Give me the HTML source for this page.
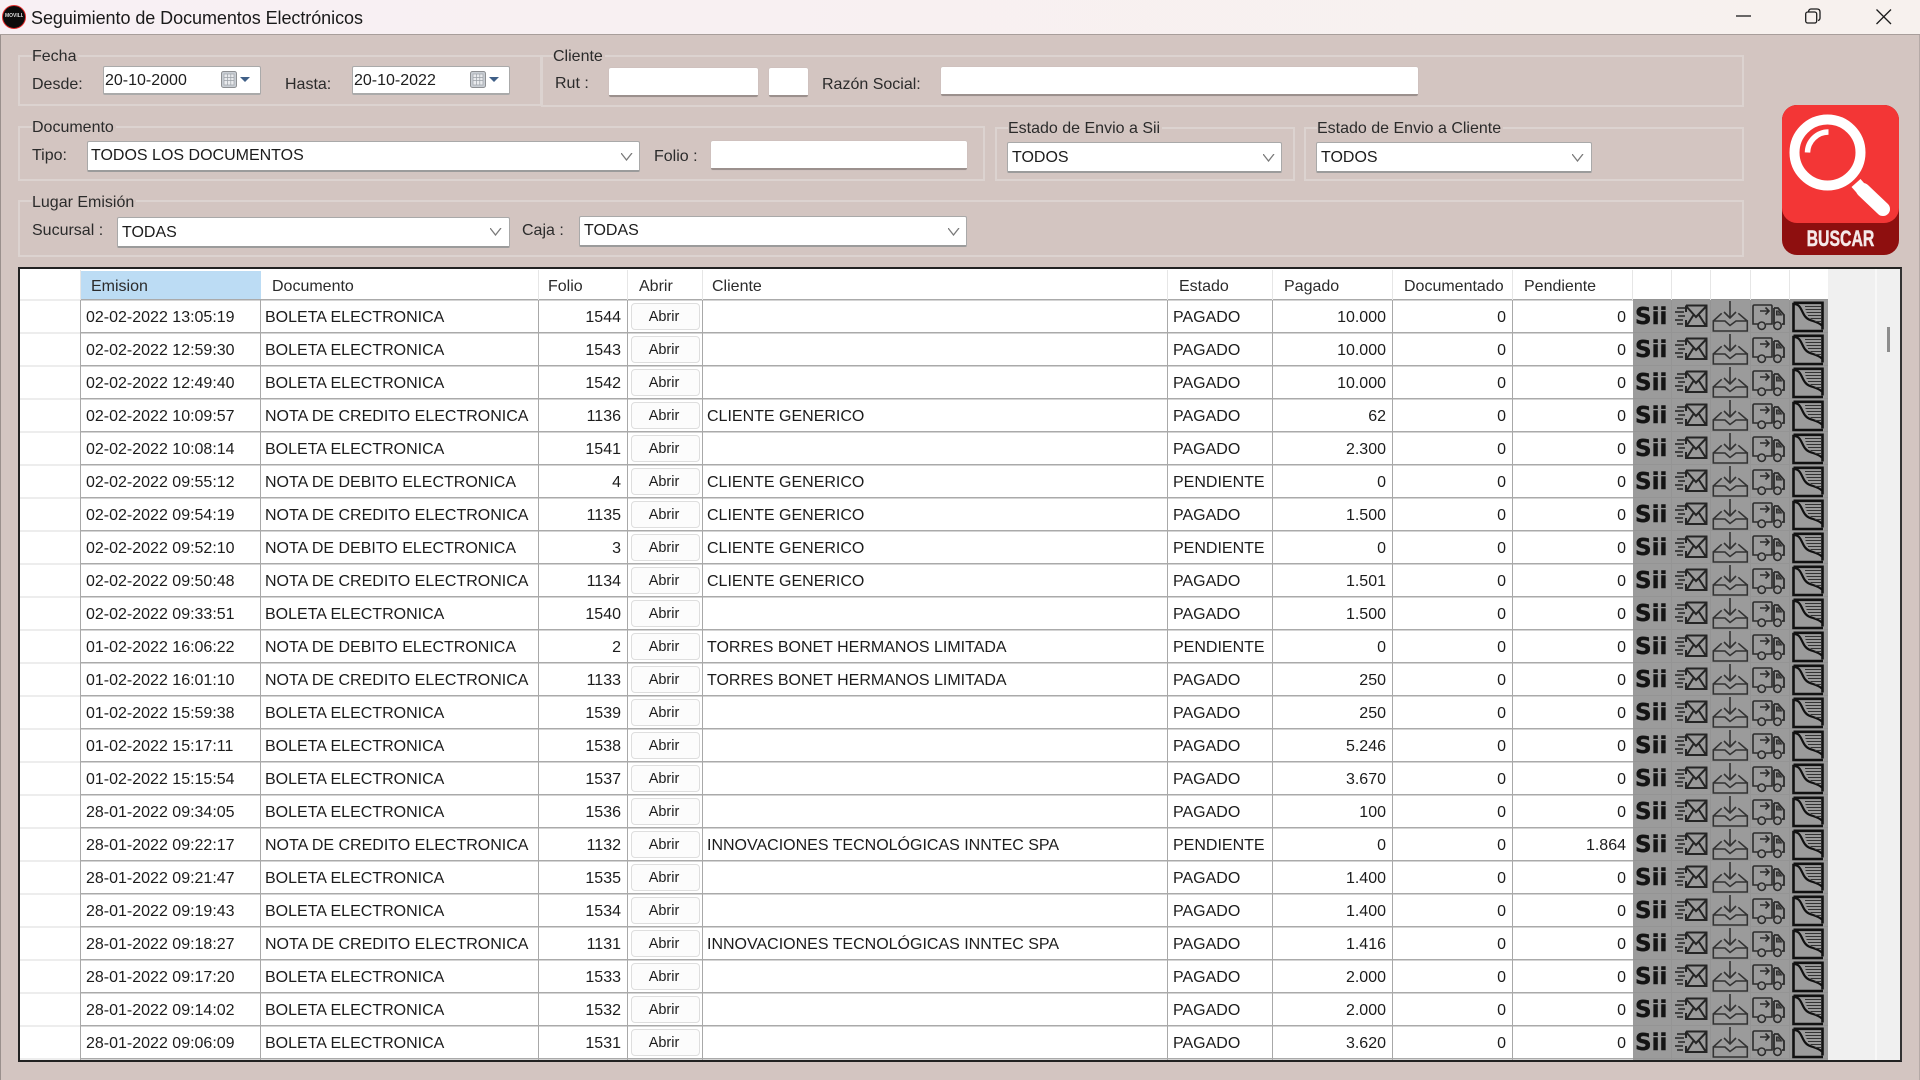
<!DOCTYPE html>
<html><head><meta charset="utf-8"><title>Seguimiento de Documentos Electrónicos</title>
<style>
html,body{margin:0;padding:0}
body{width:1920px;height:1080px;position:relative;overflow:hidden;background:#d3c5c1;font-family:"Liberation Sans",sans-serif;font-size:16px;color:#1c1c1c;filter:blur(.35px)}
div,span,svg{position:absolute;box-sizing:border-box}
.l{white-space:nowrap;line-height:20px;height:20px;color:#2b2b2b}
.g{border:2px solid #dcd3d0}
.lb{background:#d3c5c1;padding:0 2px 0 0}
.inp{background:#fff;border-bottom:2px solid #9b908d;border-radius:2px;box-shadow:0 0 1px #b9aeab}
.cb{background:#fff;border:1px solid #a9a9a9;border-bottom:2px solid #9b9b9b;border-radius:2px;line-height:28px;padding-left:3px;white-space:nowrap;color:#1c1c1c}
#tb{left:0;top:0;width:1920px;height:35px;background:linear-gradient(90deg,#f8f0f4,#f7f1ee);border-bottom:1px solid #a89e9b}
#tbl{left:18px;top:267px;width:1884px;height:795px;border:2px solid #222;border-right:2px solid #333;background:#fff;overflow:hidden}
#in{left:-20px;top:-269px;width:1920px;height:1080px}
.h{top:277px;line-height:20px;white-space:nowrap;color:#2b2b2b}
.r{left:0;width:1920px;height:33px;white-space:nowrap}
.r span{top:7px;line-height:21px}
.d{left:86px}.t{left:265px}.c{left:707px}.e{left:1173px}
.f{right:1299px}.p{right:534px}.o{right:414px}.n{right:294px}
.r .b{left:631px;top:3px;width:69px;height:27px;background:#fcfcfc;border:1px solid #dedede;border-radius:4px;text-align:center;line-height:26px;font-size:14.5px;padding-right:3px}
.r .s{left:1635px;top:3px;font:bold 23px/29px "DejaVu Sans",sans-serif;color:#141414;-webkit-text-stroke:.4px #141414}
.r svg{left:1633px;top:0}
.v{width:1px;top:300px;height:762px;background:#a8a8a8}
.vh{width:1px;top:270px;height:30px;background:#e6e6e6}
</style></head><body>
<svg width="0" height="0" style="left:0;top:0"><defs>
<g id="ic" fill="none" stroke="#252525" stroke-width="1.7">
 <!-- mail -->
 <g transform="translate(39,0)">
  <path d="M14 5.5H34.5V26H14V20M14 12V5.5M14 6l10 11L34.5 6M14.5 26l7-11M34 26l-7-11" stroke-width="2"/>
  <path d="M5 8h8M3 12h9M6 16h7M3 20h8M5 24h6" stroke-width="1.5"/>
 </g>
 <!-- inbox -->
 <g transform="translate(78,0)" stroke="#333" stroke-width="1.6">
  <path d="M2.300 21L10.700 13.300M36.300 21L27.300 13.300M2.300 21V31H36.300V21H25L19 25.500L14 21Z"/>
  <path d="M19 1V18M13 12l6 6 6-6"/>
 </g>
 <!-- truck -->
 <g transform="translate(117,0)" stroke="#2c2c2c" stroke-width="1.600">
  <path d="M8 24H3V6.500Q3 5 4.500 5H21Q22 5 22 6.500V24H16"/>
  <path d="M10 11H19M15.500 7.500L19 11L15.500 14.500"/>
  <path d="M24 8H28L34 15V24H32M24 8V24" stroke-width="1.800"/>
  <path d="M26.500 11H28.500L31.500 15H26.500Z" fill="#555" stroke-width="1"/>
  <circle cx="11.700" cy="25.700" r="3.700"/><circle cx="27.500" cy="25.700" r="3.700"/>
 </g>
 <!-- doc -->
 <g transform="translate(156,0)" stroke="#111">
  <path d="M4.500 2.800H33.500V29.500M4.500 2.800V31H34" stroke-width="2.600"/>
  <path d="M5 4C14 4 12 17 21 20C25 21.500 29 22 33 25.500" stroke-width="2.200"/>
  <path d="M16 6.500H32M16.500 9.500H32M17.500 12.500H32M19 15.500H32M21.500 18.500H32M26 21.500H32" stroke-width="1.100" stroke="#333"/>
 </g>
</g>
<g id="cal"><rect x=".5" y=".5" width="15" height="16" rx="2" fill="#c9ced4" stroke="#8d8f92"/><rect x="3" y="3" width="10" height="11" fill="#e9ebee" stroke="#a5a9ae" stroke-width=".8"/><path d="M3 6.500h10M3 9.500h10M6.500 3v11M9.800 3v11" stroke="#9aa0a6" stroke-width=".7"/></g>
<path id="chev" d="M0 0l5.500 7L11 0" fill="none" stroke="#7a7a7a" stroke-width="1.300"/>
</defs></svg>

<div id="tb"></div>
<div style="left:0;top:35px;width:1px;height:1045px;background:#9a908d"></div>
<div style="left:1919px;top:35px;width:1px;height:1045px;background:#b5aaa7"></div>
<div style="left:2px;top:5px;width:24px;height:24px;border-radius:50%;background:#0c0c0c;border:1px solid #e02a2a"></div>
<div style="left:5px;top:12px;width:18px;height:8px;font:bold 5px/8px 'Liberation Sans',sans-serif;color:#ddd;text-align:center;white-space:nowrap;overflow:hidden">MOVILLY</div>
<div style="left:31px;top:7px;font-size:18px;line-height:22px;color:#1a1a1a;white-space:nowrap;letter-spacing:-.06px">Seguimiento de Documentos Electrónicos</div>
<svg style="left:1730px;top:5px" width="190" height="24" fill="none" stroke="#1c1c1c" stroke-width="1.300">
 <path d="M6 11H21"/>
 <rect x="75.700" y="7" width="11" height="11" rx="2"/><path d="M78.500 6.500Q79 4 81 4H87Q90 4 90 7V13Q90 15 88 15.500"/>
 <path d="M146.500 4.500L161 19M161 4.500L146.500 19"/>
</svg>

<!-- group boxes -->
<div class="g" style="left:18px;top:55px;width:524px;height:51px"></div>
<div class="g" style="left:541px;top:55px;width:1203px;height:52px"></div>
<div class="g" style="left:18px;top:126px;width:967px;height:55px"></div>
<div class="g" style="left:995px;top:127px;width:300px;height:54px"></div>
<div class="g" style="left:1304px;top:127px;width:440px;height:54px"></div>
<div class="g" style="left:18px;top:200px;width:1726px;height:57px"></div>

<div class="l lb" style="left:32px;top:47px">Fecha</div>
<div class="l" style="left:32px;top:75px">Desde:</div>
<div class="l" style="left:285px;top:75px">Hasta:</div>
<div class="cb" style="left:103px;top:66px;width:158px;height:29px;padding-left:1px;line-height:27px;border-color:#aaa">20-10-2000</div>
<svg style="left:221px;top:71px" width="32" height="18"><use href="#cal"/><path d="M19 6h10l-5 5z" fill="#3f5f87"/></svg>
<div class="cb" style="left:352px;top:66px;width:158px;height:29px;padding-left:1px;line-height:27px;border-color:#aaa">20-10-2022</div>
<svg style="left:470px;top:71px" width="32" height="18"><use href="#cal"/><path d="M19 6h10l-5 5z" fill="#3f5f87"/></svg>

<div class="l lb" style="left:553px;top:47px">Cliente</div>
<div class="l" style="left:555px;top:74px">Rut :</div>
<div class="inp" style="left:609px;top:68px;width:149px;height:29px"></div>
<div class="inp" style="left:769px;top:68px;width:39px;height:29px"></div>
<div class="l" style="left:822px;top:75px">Razón Social:</div>
<div class="inp" style="left:941px;top:67px;width:477px;height:29px"></div>

<div class="l lb" style="left:32px;top:118px">Documento</div>
<div class="l" style="left:32px;top:146px">Tipo:</div>
<div class="cb" style="left:87px;top:141px;width:553px;height:31px">TODOS LOS DOCUMENTOS</div>
<svg style="left:621px;top:153px" width="12" height="8"><use href="#chev"/></svg>
<div class="l" style="left:654px;top:147px">Folio :</div>
<div class="inp" style="left:711px;top:141px;width:256px;height:29px"></div>

<div class="l lb" style="left:1008px;top:119px">Estado de Envio a Sii</div>
<div class="cb" style="left:1007px;top:142px;width:275px;height:31px;padding-left:4px;line-height:29px">TODOS</div>
<svg style="left:1263px;top:154px" width="12" height="8"><use href="#chev"/></svg>
<div class="l lb" style="left:1317px;top:119px">Estado de Envio a Cliente</div>
<div class="cb" style="left:1316px;top:142px;width:276px;height:31px;padding-left:4px;line-height:29px">TODOS</div>
<svg style="left:1572px;top:154px" width="12" height="8"><use href="#chev"/></svg>

<div class="l lb" style="left:32px;top:193px">Lugar Emisión</div>
<div class="l" style="left:32px;top:221px">Sucursal :</div>
<div class="cb" style="left:117px;top:217px;width:393px;height:31px;padding-left:4px;line-height:29px">TODAS</div>
<svg style="left:490px;top:228px" width="12" height="8"><use href="#chev"/></svg>
<div class="l" style="left:522px;top:221px">Caja :</div>
<div class="cb" style="left:579px;top:216px;width:388px;height:31px;padding-left:4px;line-height:28px">TODAS</div>
<svg style="left:948px;top:228px" width="12" height="8"><use href="#chev"/></svg>

<!-- buscar -->
<svg style="left:1782px;top:105px" width="117" height="150" viewBox="0 0 117 150">
 <rect width="117" height="150" rx="15" fill="#8e0f0f"/>
 <path d="M0 15A15 15 0 0 1 15 0H102A15 15 0 0 1 117 15V103A15 15 0 0 1 102 118H15A15 15 0 0 1 0 103Z" fill="#f33636"/>
 <circle cx="45.500" cy="47.500" r="33" fill="none" stroke="#fff" stroke-width="10"/>
 <path d="M25.500 47.500A21 21 0 0 1 46.500 27" fill="none" stroke="#fff" stroke-width="5.500"/>
 <path d="M81 85L101 104" stroke="#fff" stroke-width="14" stroke-linecap="round"/>
 <path d="M74 78L82 87" stroke="#fff" stroke-width="12"/>
</svg>
<div style="left:1781px;top:227px;width:119px;text-align:center;font:bold 22px/24px 'Liberation Sans',sans-serif;color:#f5e8e8;transform:scaleX(.72);white-space:nowrap;-webkit-text-stroke:.5px #f5e8e8">BUSCAR</div>

<!-- table -->
<div id="tbl"><div id="in">
 <div style="left:1828px;top:269px;width:47px;height:800px;background:#f0f0f0"></div>
 <div style="left:1875px;top:269px;width:2px;height:800px;background:#f8f8f8"></div>
 <div style="left:1877px;top:269px;width:24px;height:800px;background:#f0f0f0"></div>
 <div style="left:1887px;top:327px;width:3px;height:25px;background:#8d8d8d"></div>
 <div style="left:81px;top:271px;width:180px;height:28px;background:#bcdcf4"></div>
 <div style="left:20px;top:299px;width:61px;height:763px;background:repeating-linear-gradient(#ededed 0 2px,#fff 2px 33px)"></div>
 <div style="left:81px;top:299px;width:1552px;height:763px;background:repeating-linear-gradient(#aaaaaa 0 1.500px,#fff 1.500px 33px)"></div>
 <div style="left:1633px;top:299px;width:195px;height:763px;background:repeating-linear-gradient(#949494 0 1px,#9b9b9b 1px 33px)"></div>
 <div class="vh" style="left:80px"></div><div class="vh" style="left:538px"></div><div class="vh" style="left:627px"></div><div class="vh" style="left:702px"></div><div class="vh" style="left:1167px"></div><div class="vh" style="left:1272px"></div><div class="vh" style="left:1392px"></div><div class="vh" style="left:1512px"></div><div class="vh" style="left:1632px"></div><div class="vh" style="left:1671px"></div><div class="vh" style="left:1710px"></div><div class="vh" style="left:1750px"></div><div class="vh" style="left:1789px"></div>
 <div class="v" style="left:80px"></div><div class="v" style="left:260px"></div><div class="v" style="left:538px"></div><div class="v" style="left:627px"></div><div class="v" style="left:702px"></div><div class="v" style="left:1167px"></div><div class="v" style="left:1272px"></div><div class="v" style="left:1392px"></div><div class="v" style="left:1512px"></div>
 <div class="v" style="left:1671px;background:#949494"></div><div class="v" style="left:1710px;background:#949494"></div><div class="v" style="left:1750px;background:#949494"></div><div class="v" style="left:1789px;background:#949494"></div>
 <div class="h" style="left:91px">Emision</div><div class="h" style="left:272px">Documento</div><div class="h" style="left:548px">Folio</div><div class="h" style="left:639px">Abrir</div><div class="h" style="left:712px">Cliente</div><div class="h" style="left:1179px">Estado</div><div class="h" style="left:1284px">Pagado</div><div class="h" style="left:1404px">Documentado</div><div class="h" style="left:1524px">Pendiente</div>

 <div class="r" style="top:300px"><span class="d">02-02-2022 13:05:19</span><span class="t">BOLETA ELECTRONICA</span><span class="f">1544</span><span class="b">Abrir</span><span class="e">PAGADO</span><span class="p">10.000</span><span class="o">0</span><span class="n">0</span><span class="s">Sii</span><svg width="195" height="33"><use href="#ic"/></svg></div>
 <div class="r" style="top:333px"><span class="d">02-02-2022 12:59:30</span><span class="t">BOLETA ELECTRONICA</span><span class="f">1543</span><span class="b">Abrir</span><span class="e">PAGADO</span><span class="p">10.000</span><span class="o">0</span><span class="n">0</span><span class="s">Sii</span><svg width="195" height="33"><use href="#ic"/></svg></div>
 <div class="r" style="top:366px"><span class="d">02-02-2022 12:49:40</span><span class="t">BOLETA ELECTRONICA</span><span class="f">1542</span><span class="b">Abrir</span><span class="e">PAGADO</span><span class="p">10.000</span><span class="o">0</span><span class="n">0</span><span class="s">Sii</span><svg width="195" height="33"><use href="#ic"/></svg></div>
 <div class="r" style="top:399px"><span class="d">02-02-2022 10:09:57</span><span class="t">NOTA DE CREDITO ELECTRONICA</span><span class="f">1136</span><span class="b">Abrir</span><span class="c">CLIENTE GENERICO</span><span class="e">PAGADO</span><span class="p">62</span><span class="o">0</span><span class="n">0</span><span class="s">Sii</span><svg width="195" height="33"><use href="#ic"/></svg></div>
 <div class="r" style="top:432px"><span class="d">02-02-2022 10:08:14</span><span class="t">BOLETA ELECTRONICA</span><span class="f">1541</span><span class="b">Abrir</span><span class="e">PAGADO</span><span class="p">2.300</span><span class="o">0</span><span class="n">0</span><span class="s">Sii</span><svg width="195" height="33"><use href="#ic"/></svg></div>
 <div class="r" style="top:465px"><span class="d">02-02-2022 09:55:12</span><span class="t">NOTA DE DEBITO ELECTRONICA</span><span class="f">4</span><span class="b">Abrir</span><span class="c">CLIENTE GENERICO</span><span class="e">PENDIENTE</span><span class="p">0</span><span class="o">0</span><span class="n">0</span><span class="s">Sii</span><svg width="195" height="33"><use href="#ic"/></svg></div>
 <div class="r" style="top:498px"><span class="d">02-02-2022 09:54:19</span><span class="t">NOTA DE CREDITO ELECTRONICA</span><span class="f">1135</span><span class="b">Abrir</span><span class="c">CLIENTE GENERICO</span><span class="e">PAGADO</span><span class="p">1.500</span><span class="o">0</span><span class="n">0</span><span class="s">Sii</span><svg width="195" height="33"><use href="#ic"/></svg></div>
 <div class="r" style="top:531px"><span class="d">02-02-2022 09:52:10</span><span class="t">NOTA DE DEBITO ELECTRONICA</span><span class="f">3</span><span class="b">Abrir</span><span class="c">CLIENTE GENERICO</span><span class="e">PENDIENTE</span><span class="p">0</span><span class="o">0</span><span class="n">0</span><span class="s">Sii</span><svg width="195" height="33"><use href="#ic"/></svg></div>
 <div class="r" style="top:564px"><span class="d">02-02-2022 09:50:48</span><span class="t">NOTA DE CREDITO ELECTRONICA</span><span class="f">1134</span><span class="b">Abrir</span><span class="c">CLIENTE GENERICO</span><span class="e">PAGADO</span><span class="p">1.501</span><span class="o">0</span><span class="n">0</span><span class="s">Sii</span><svg width="195" height="33"><use href="#ic"/></svg></div>
 <div class="r" style="top:597px"><span class="d">02-02-2022 09:33:51</span><span class="t">BOLETA ELECTRONICA</span><span class="f">1540</span><span class="b">Abrir</span><span class="e">PAGADO</span><span class="p">1.500</span><span class="o">0</span><span class="n">0</span><span class="s">Sii</span><svg width="195" height="33"><use href="#ic"/></svg></div>
 <div class="r" style="top:630px"><span class="d">01-02-2022 16:06:22</span><span class="t">NOTA DE DEBITO ELECTRONICA</span><span class="f">2</span><span class="b">Abrir</span><span class="c">TORRES BONET HERMANOS LIMITADA</span><span class="e">PENDIENTE</span><span class="p">0</span><span class="o">0</span><span class="n">0</span><span class="s">Sii</span><svg width="195" height="33"><use href="#ic"/></svg></div>
 <div class="r" style="top:663px"><span class="d">01-02-2022 16:01:10</span><span class="t">NOTA DE CREDITO ELECTRONICA</span><span class="f">1133</span><span class="b">Abrir</span><span class="c">TORRES BONET HERMANOS LIMITADA</span><span class="e">PAGADO</span><span class="p">250</span><span class="o">0</span><span class="n">0</span><span class="s">Sii</span><svg width="195" height="33"><use href="#ic"/></svg></div>
 <div class="r" style="top:696px"><span class="d">01-02-2022 15:59:38</span><span class="t">BOLETA ELECTRONICA</span><span class="f">1539</span><span class="b">Abrir</span><span class="e">PAGADO</span><span class="p">250</span><span class="o">0</span><span class="n">0</span><span class="s">Sii</span><svg width="195" height="33"><use href="#ic"/></svg></div>
 <div class="r" style="top:729px"><span class="d">01-02-2022 15:17:11</span><span class="t">BOLETA ELECTRONICA</span><span class="f">1538</span><span class="b">Abrir</span><span class="e">PAGADO</span><span class="p">5.246</span><span class="o">0</span><span class="n">0</span><span class="s">Sii</span><svg width="195" height="33"><use href="#ic"/></svg></div>
 <div class="r" style="top:762px"><span class="d">01-02-2022 15:15:54</span><span class="t">BOLETA ELECTRONICA</span><span class="f">1537</span><span class="b">Abrir</span><span class="e">PAGADO</span><span class="p">3.670</span><span class="o">0</span><span class="n">0</span><span class="s">Sii</span><svg width="195" height="33"><use href="#ic"/></svg></div>
 <div class="r" style="top:795px"><span class="d">28-01-2022 09:34:05</span><span class="t">BOLETA ELECTRONICA</span><span class="f">1536</span><span class="b">Abrir</span><span class="e">PAGADO</span><span class="p">100</span><span class="o">0</span><span class="n">0</span><span class="s">Sii</span><svg width="195" height="33"><use href="#ic"/></svg></div>
 <div class="r" style="top:828px"><span class="d">28-01-2022 09:22:17</span><span class="t">NOTA DE CREDITO ELECTRONICA</span><span class="f">1132</span><span class="b">Abrir</span><span class="c">INNOVACIONES TECNOLÓGICAS INNTEC SPA</span><span class="e">PENDIENTE</span><span class="p">0</span><span class="o">0</span><span class="n">1.864</span><span class="s">Sii</span><svg width="195" height="33"><use href="#ic"/></svg></div>
 <div class="r" style="top:861px"><span class="d">28-01-2022 09:21:47</span><span class="t">BOLETA ELECTRONICA</span><span class="f">1535</span><span class="b">Abrir</span><span class="e">PAGADO</span><span class="p">1.400</span><span class="o">0</span><span class="n">0</span><span class="s">Sii</span><svg width="195" height="33"><use href="#ic"/></svg></div>
 <div class="r" style="top:894px"><span class="d">28-01-2022 09:19:43</span><span class="t">BOLETA ELECTRONICA</span><span class="f">1534</span><span class="b">Abrir</span><span class="e">PAGADO</span><span class="p">1.400</span><span class="o">0</span><span class="n">0</span><span class="s">Sii</span><svg width="195" height="33"><use href="#ic"/></svg></div>
 <div class="r" style="top:927px"><span class="d">28-01-2022 09:18:27</span><span class="t">NOTA DE CREDITO ELECTRONICA</span><span class="f">1131</span><span class="b">Abrir</span><span class="c">INNOVACIONES TECNOLÓGICAS INNTEC SPA</span><span class="e">PAGADO</span><span class="p">1.416</span><span class="o">0</span><span class="n">0</span><span class="s">Sii</span><svg width="195" height="33"><use href="#ic"/></svg></div>
 <div class="r" style="top:960px"><span class="d">28-01-2022 09:17:20</span><span class="t">BOLETA ELECTRONICA</span><span class="f">1533</span><span class="b">Abrir</span><span class="e">PAGADO</span><span class="p">2.000</span><span class="o">0</span><span class="n">0</span><span class="s">Sii</span><svg width="195" height="33"><use href="#ic"/></svg></div>
 <div class="r" style="top:993px"><span class="d">28-01-2022 09:14:02</span><span class="t">BOLETA ELECTRONICA</span><span class="f">1532</span><span class="b">Abrir</span><span class="e">PAGADO</span><span class="p">2.000</span><span class="o">0</span><span class="n">0</span><span class="s">Sii</span><svg width="195" height="33"><use href="#ic"/></svg></div>
 <div class="r" style="top:1026px"><span class="d">28-01-2022 09:06:09</span><span class="t">BOLETA ELECTRONICA</span><span class="f">1531</span><span class="b">Abrir</span><span class="e">PAGADO</span><span class="p">3.620</span><span class="o">0</span><span class="n">0</span><span class="s">Sii</span><svg width="195" height="33"><use href="#ic"/></svg></div>
</div></div>
</body></html>
